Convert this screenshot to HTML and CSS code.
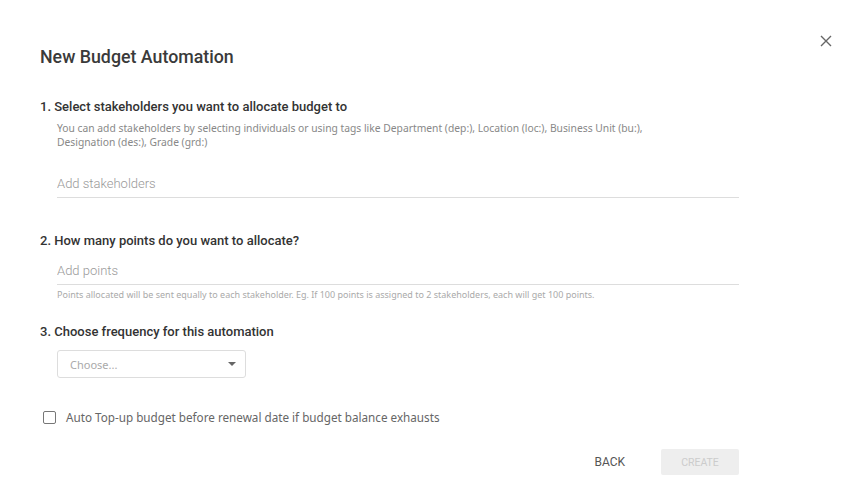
FILE: index.html
```html
<!DOCTYPE html>
<html lang="en">
<head>
    <meta charset="UTF-8">
    <meta name="viewport" content="width=device-width, initial-scale=1.0">
    <title>New Budget Automation</title>
    <link rel="stylesheet" href="styles.css">
</head>
<body>
    <div class="modal">
        <button class="close" aria-label="Close">
            <svg width="12" height="12" viewBox="0 0 12 12"><path d="M1 1L11 11M11 1L1 11" stroke="#666" stroke-width="1.4"/></svg>
        </button>
        <h1 class="title">New Budget Automation</h1>

        <div class="step">
            <h2>1. Select stakeholders you want to allocate budget to</h2>
            <p class="desc">You can add stakeholders by selecting individuals or using tags like Department (dep:), Location (loc:), Business Unit (bu:),<br>Designation (des:), Grade (grd:)</p>
            <div class="field first">
                <input type="text" placeholder="Add stakeholders">
            </div>
        </div>

        <div class="step">
            <h2>2. How many points do you want to allocate?</h2>
            <div class="field">
                <input type="text" placeholder="Add points">
            </div>
            <p class="hint">Points allocated will be sent equally to each stakeholder. Eg. If 100 points is assigned to 2 stakeholders, each will get 100 points.</p>
        </div>

        <div class="step">
            <h2>3. Choose frequency for this automation</h2>
            <div class="select">
                <span>Choose...</span>
                <span class="caret"></span>
            </div>
        </div>

        <label class="check">
            <span class="box"></span>
            Auto Top-up budget before renewal date if budget balance exhausts
        </label>

        <div class="actions">
            <button class="btn back">BACK</button>
            <button class="btn create" disabled>CREATE</button>
        </div>
    </div>
</body>
</html>
```

FILE: styles.css
```css
body {
    margin: 0;
    background-color: #fff;
    font-family: "Noto Sans", "Open Sans", sans-serif;
    color: #333;
}
.modal {
    position: relative;
    width: 857px;
    height: 487px;
    box-sizing: border-box;
    padding: 45px 0 0 40px;
}
.close {
    position: absolute;
    top: 35px;
    right: 25px;
    background: none;
    border: none;
    padding: 0;
    cursor: pointer;
}
.title {
    margin: 0 0 28px;
    font-family: Roboto, sans-serif;
    font-size: 17.8px;
    font-weight: 500;
    color: #3a3a3a;
    line-height: 24px;
}
.step h2 {
    margin: 0;
    font-family: Roboto, sans-serif;
    font-size: 13px;
    font-weight: 500;
    line-height: 20px;
    color: #333;
}
.desc {
    margin: 4px 0 0 17px;
    font-size: 10.3px;
    line-height: 14px;
    color: #888;
}
.field {
    margin: 7px 0 0 17px;
    width: 682px;
    border-bottom: 1px solid #ddd;
}
.field.first {
    margin-top: 22px;
    margin-bottom: 33px;
}
.field input {
    width: 100%;
    border: none;
    outline: none;
    padding: 0 0 4px;
    font-family: Roboto, sans-serif;
    font-size: 13px;
    font-weight: 300;
    line-height: 18px;
    color: #333;
    background: transparent;
}
.field input::placeholder {
    color: #999;
}
.hint {
    margin: 4px 0 21px 17px;
    font-size: 9px;
    line-height: 12px;
    color: #aaa;
}
.select {
    margin: 8px 0 0 17px;
    width: 189px;
    height: 28px;
    box-sizing: border-box;
    border: 1px solid #ddd;
    border-radius: 3px;
    display: flex;
    align-items: center;
    justify-content: space-between;
    padding: 0 9px 0 12px;
    font-size: 11px;
    color: #aaa;
}
.caret {
    width: 0;
    height: 0;
    border-left: 4px solid transparent;
    border-right: 4px solid transparent;
    border-top: 4px solid #666;
}
.check {
    display: flex;
    align-items: center;
    gap: 10px;
    margin: 31px 0 0 3px;
    font-size: 11.7px;
    color: #666;
}
.box {
    width: 11px;
    height: 11px;
    border: 1.5px solid #777;
    border-radius: 2px;
}
.actions {
    display: flex;
    justify-content: flex-end;
    align-items: center;
    gap: 22px;
    width: 699px;
    margin-top: 24px;
}
.btn {
    font-family: Roboto, sans-serif;
    font-size: 12px;
    border: none;
    background: none;
    padding: 0;
    cursor: pointer;
}
.back {
    color: #555;
    padding: 0 14px;
}
.create {
    width: 78px;
    height: 26px;
    background-color: #eee;
    color: #ccc;
    font-size: 10.5px;
    border-radius: 2px;
    cursor: default;
}
```
